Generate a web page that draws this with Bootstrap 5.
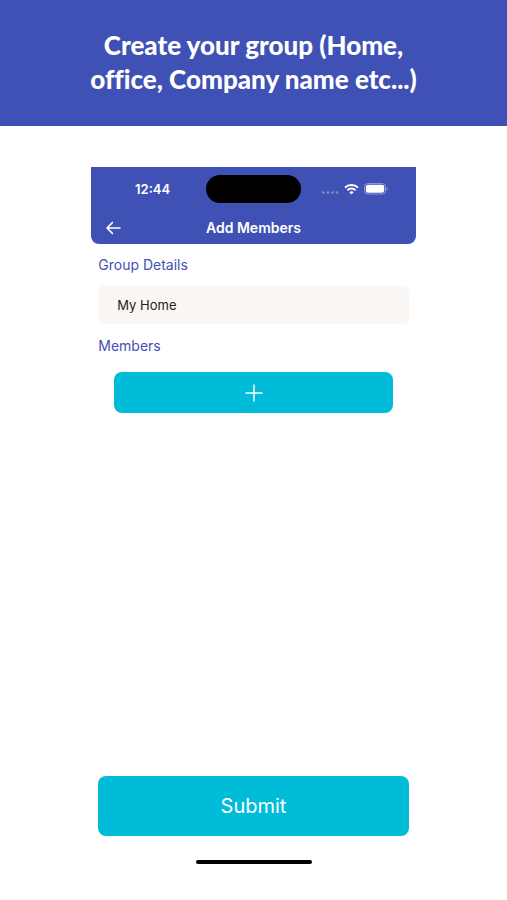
<!DOCTYPE html>
<html lang="en">
<head>
<meta charset="utf-8">
<meta name="viewport" content="width=device-width, initial-scale=1">
<title>Add Members</title>
<link rel="stylesheet" href="https://cdn.jsdelivr.net/npm/bootstrap@5.3.0/dist/css/bootstrap.min.css">
<style>
  :root { --indigo: #3f51b5; --cyan: #00bcd9; }
  body { font-family: Inter, "Liberation Sans", sans-serif; background: #fff; }
  .bg-indigo { background: var(--indigo); }
  .text-indigo { color: var(--indigo); }
  .banner { padding: 28px 64px 30px; margin-bottom: 41px; }
  .banner h1 { font: 900 26px/34px Lato, sans-serif; font-variant-ligatures: none; }
  .phone { width: 64%; }
  .app-header { border-radius: 0 0 8px 8px; padding: 8px 14px 5px; }
  .status { font-size: 13px; line-height: 28px; }
  .island { width: 95px; height: 28px; background: #000; }
  .side { flex: 1 1 0; }
  .clock { padding-left: 4px; padding-right: 10px; }
  .signals { padding-right: 14px; gap: 5px; }
  .title-row { padding-top: 14px; }
  .title-row h2 { font-size: 14px; line-height: 22px; }
  .back { width: 16px; height: 22px; }
  .section-label { font-size: 14px; line-height: 20px; }
  .form-area { padding: 11px 7px 0; }
  .form-area label { margin-bottom: 11px; }
  .field, .field:focus { background: #faf6f4; font-size: 13px; line-height: 18px; padding: 10px 19px; border-radius: 6px; color: #222; }
  .btn-cyan, .btn-cyan:hover, .btn-cyan:active { background: var(--cyan) !important; color: #fff !important; border: 0; border-radius: 8px; }
  .add { height: 41px; }
  .submit { height: 60px; font-size: 20px; }
  .home-bar { width: 116px; height: 4px; background: #000; margin: 24px auto 36px; }
</style>
<script defer src="https://cdn.jsdelivr.net/npm/bootstrap@5.3.0/dist/js/bootstrap.bundle.min.js"></script>
</head>
<body class="d-flex flex-column min-vh-100">
  <header class="banner bg-indigo text-white text-center">
    <h1 class="m-0">Create your group (Home,<br>office, Company name etc...)</h1>
  </header>

  <main class="phone mx-auto flex-grow-1 d-flex flex-column">
    <div class="app-header bg-indigo text-white">
      <div class="status d-flex align-items-center">
        <div class="side clock text-center fw-semibold">12:44</div>
        <div class="island rounded-pill"></div>
        <div class="side signals d-flex align-items-center justify-content-end">
          <svg width="17" height="12" viewBox="0 0 17 12" fill="#fff" fill-opacity=".35" aria-hidden="true"><circle cx="1.5" cy="9.5" r="1.3"/><circle cx="6" cy="9.5" r="1.3"/><circle cx="10.5" cy="9.5" r="1.3"/><circle cx="15" cy="9.5" r="1.3"/></svg>
          <svg width="15" height="12" viewBox="0 0 15 12" fill="none" stroke="#fff" stroke-width="2" aria-hidden="true"><path d="M.9 4.6a9.4 9.4 0 0 1 13.2 0"/><path d="M3.4 7.2a5.9 5.9 0 0 1 8.2 0"/><path d="M7.5 11.5 5.4 9.3a3 3 0 0 1 4.2 0z" fill="#fff" stroke="none"/></svg>
          <svg width="24" height="12" viewBox="0 0 24 12" aria-hidden="true"><rect x=".5" y=".5" width="21" height="10.5" rx="3.4" fill="none" stroke="#fff" stroke-opacity=".4"/><rect x="1.8" y="1.8" width="18.4" height="7.9" rx="2.2" fill="#fff"/><path d="M22.6 4v3.6c.8-.3 1.2-1 1.2-1.8s-.4-1.5-1.2-1.8z" fill="#fff" fill-opacity=".45"/></svg>
        </div>
      </div>
      <div class="title-row d-flex align-items-center">
        <button type="button" class="back btn p-0 border-0 d-flex align-items-center" aria-label="Back">
          <svg width="16" height="14" viewBox="0 0 16 14" fill="none" stroke="#fff" stroke-width="1.5" stroke-linecap="round" stroke-linejoin="round" aria-hidden="true"><path d="M15 7H2.2M7.4 1.6 2 7l5.4 5.4"/></svg>
        </button>
        <h2 class="flex-grow-1 text-center fw-semibold m-0">Add Members</h2>
        <span class="back"></span>
      </div>
    </div>

    <form class="form-area flex-grow-1 d-flex flex-column">
      <label for="group" class="section-label text-indigo">Group Details</label>
      <input id="group" type="text" class="field form-control border-0 shadow-none" value="My Home">
      <h3 class="section-label text-indigo fw-normal mt-2 mb-3 pt-1">Members</h3>
      <button type="button" class="btn btn-cyan add mx-3 p-0 d-flex align-items-center justify-content-center" aria-label="Add member">
        <svg width="18" height="18" viewBox="0 0 18 18" stroke="#fff" stroke-width="1.4" stroke-linecap="round" aria-hidden="true"><path d="M9 1v16M1 9h16"/></svg>
      </button>
      <button type="submit" class="btn btn-cyan submit mt-auto p-0">Submit</button>
    </form>
    <div class="home-bar rounded-pill"></div>
  </main>
</body>
</html>
